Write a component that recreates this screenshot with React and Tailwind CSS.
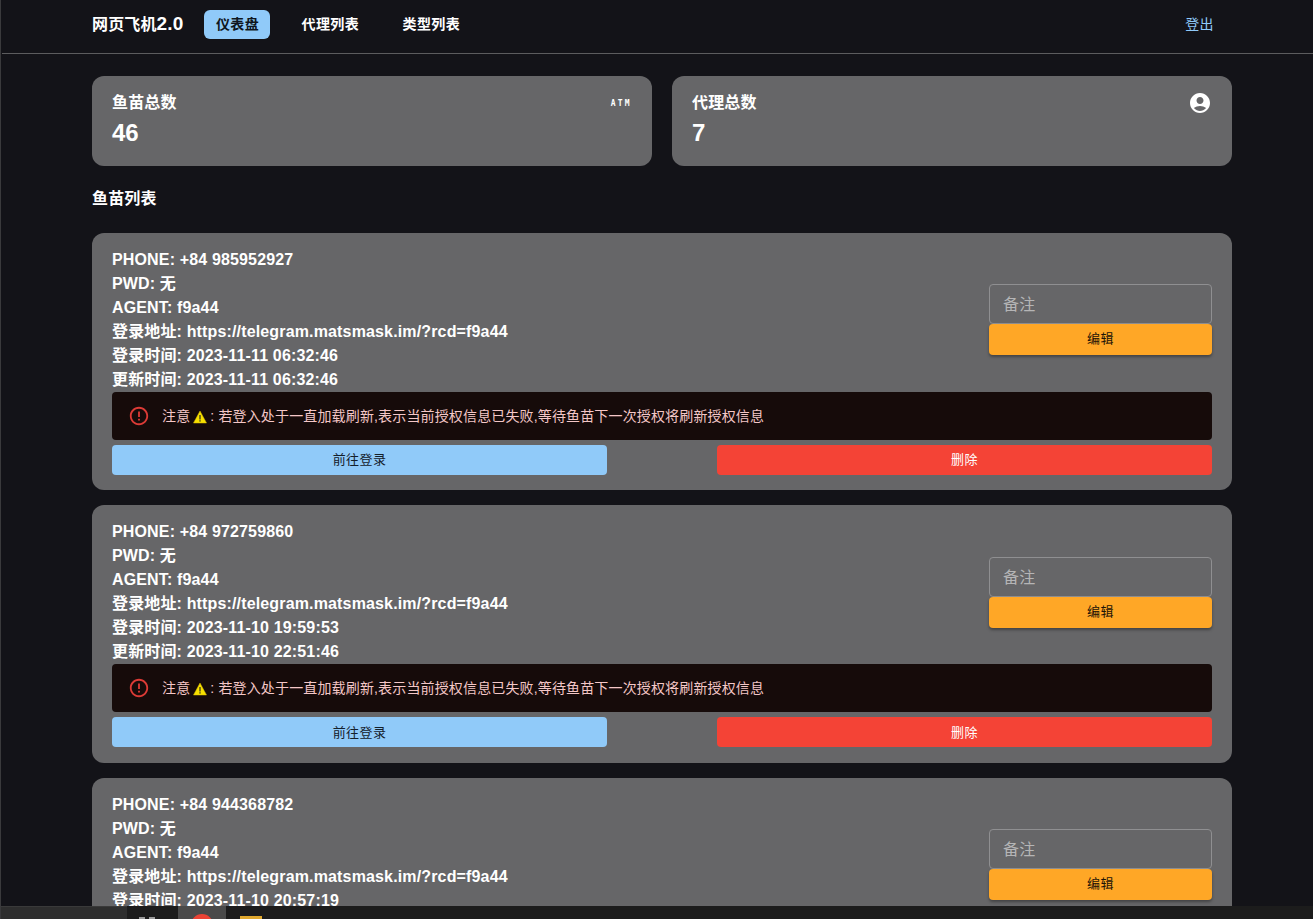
const font = { fontFamily: '"Liberation Sans", "Noto Sans CJK SC", sans-serif' };

function Account() {
  return (
    <svg viewBox="0 0 24 24" className="w-6 h-6" fill="#fff">
      <path d="M12 2C6.48 2 2 6.48 2 12s4.48 10 10 10 10-4.48 10-10S17.52 2 12 2zm0 4c1.93 0 3.5 1.57 3.5 3.5S13.93 13 12 13s-3.5-1.57-3.5-3.5S10.07 6 12 6zm0 14c-2.03 0-4.43-.82-6.14-2.88C7.55 15.8 9.68 15 12 15s4.45.8 6.14 2.12C16.43 19.18 14.03 20 12 20z" />
    </svg>
  );
}

function Alert() {
  return (
    <svg viewBox="0 0 24 24" className="w-[22px] h-[22px] shrink-0" fill="#dc3b36">
      <path d="M11 15h2v2h-2zm0-8h2v6h-2zm.99-5C6.47 2 2 6.48 2 12s4.47 10 9.99 10C17.52 22 22 17.52 22 12S17.52 2 11.99 2zM12 20c-4.42 0-8-3.58-8-8s3.58-8 8-8 8 3.58 8 8-3.58 8-8 8z" />
    </svg>
  );
}

function Warn() {
  return (
    <svg viewBox="0 0 14 14" className="w-[14px] h-[14px] inline-block align-[-3px] mx-[3px]">
      <path d="M7 1 L13.5 13 H0.5 Z" fill="#f7e000" stroke="#d8b800" strokeWidth="0.5" />
      <rect x="6.4" y="5" width="1.2" height="4.5" fill="#222" />
      <rect x="6.4" y="10.2" width="1.2" height="1.4" fill="#222" />
    </svg>
  );
}

function Stat({ title, value, icon }) {
  return (
    <div className="flex-1 h-[90px] bg-[#666668] rounded-xl px-5 pt-[14px] text-white flex justify-between">
      <div>
        <div className="text-base font-bold leading-6 tracking-[0.15px] mt-px">{title}</div>
        <div className="text-2xl font-bold leading-8 mt-[2px]">{value}</div>
      </div>
      {icon}
    </div>
  );
}

function Fish({ phone, login, update }) {
  const lines = [
    `PHONE: ${phone}`,
    'PWD: 无',
    'AGENT: f9a44',
    '登录地址: https://telegram.matsmask.im/?rcd=f9a44',
    `登录时间: ${login}`,
    `更新时间: ${update}`,
  ];
  return (
    <div className="bg-[#666668] rounded-xl px-5 pt-[14px] pb-[15.5px] mb-[15px] text-white">
      <div className="flex items-center justify-between">
        <div className="text-base font-bold leading-6 tracking-[0.15px] pt-px -mb-px">
          {lines.map((l) => (
            <div key={l}>{l}</div>
          ))}
        </div>
        <div className="w-[223px] pt-[2px]">
          <div className="h-10 border border-[#8f8f91] rounded px-[13px] pt-[2px] flex items-center text-base text-[#b5b5b6] tracking-[0.15px]">
            备注
          </div>
          <button className="w-full h-[31px] pb-[2px] rounded bg-[#ffa726] text-[#1c1408] text-[13px] tracking-[0.4px] flex items-center justify-center shadow-[0_2px_3px_rgba(0,0,0,0.35)]">
            编辑
          </button>
        </div>
      </div>
      <div className="h-12 mt-px rounded bg-[#160b0a] text-[#f4c7c7] text-sm tracking-[0.15px] flex items-center px-4">
        <Alert />
        <span className="ml-[12px]">
          注意
          <Warn />: 若登入处于一直加载刷新,表示当前授权信息已失败,等待鱼苗下一次授权将刷新授权信息
        </span>
      </div>
      <div className="flex justify-between mt-[5px]">
        <button className="w-[495px] h-[30px] rounded bg-[#90caf9] text-[#14202b] text-[13px] tracking-[0.4px] flex items-center justify-center">
          前往登录
        </button>
        <button className="w-[495px] h-[30px] rounded bg-[#f44336] text-white text-[13px] tracking-[0.4px] flex items-center justify-center">
          删除
        </button>
      </div>
    </div>
  );
}

export default function App() {
  return (
    <div className="h-[919px] overflow-hidden bg-[#131318] border-l border-l-[#3a3a3c] flex flex-col" style={font}>
      <nav className="h-[54px] shrink-0 border-b border-[#5c5c5e] ml-px pl-[90px] pr-[99px] pb-[5px] flex items-center text-white">
        <div className="text-base font-bold mr-[21px] tracking-[0.15px]">
          网页飞机<span className="text-[19px]">2.0</span>
        </div>
        <div className="h-[29px] w-[66px] rounded-md bg-[#90caf9] text-[#0f1620] text-sm font-bold tracking-[0.4px] flex items-center justify-center mr-[31px]">
          仪表盘
        </div>
        <div className="text-sm font-bold tracking-[0.4px] w-[57px] mr-[44px] whitespace-nowrap">代理列表</div>
        <div className="text-sm font-bold tracking-[0.4px]">类型列表</div>
        <div className="ml-auto text-sm tracking-[0.4px] text-[#90caf9]">登出</div>
      </nav>
      <main className="flex-1 min-h-0 overflow-hidden w-[1140px] ml-[91px] pt-[22px]">
        <div className="flex gap-5">
          <Stat
            title="鱼苗总数"
            value="46"
            icon={
              <span className="text-[8px] leading-3 font-bold tracking-[2.3px] mt-[8px]" style={{ fontFamily: '"DejaVu Sans Mono", monospace' }}>
                ATM
              </span>
            }
          />
          <Stat title="代理总数" value="7" icon={<div className="mt-px"><Account /></div>} />
        </div>
        <h2 className="text-base font-bold tracking-[0.15px] text-white leading-6 mt-[21px] mb-[21.75px]">鱼苗列表</h2>
        <Fish phone="+84 985952927" login="2023-11-11 06:32:46" update="2023-11-11 06:32:46" />
        <Fish phone="+84 972759860" login="2023-11-10 19:59:53" update="2023-11-10 22:51:46" />
        <Fish phone="+84 944368782" login="2023-11-10 20:57:19" update="2023-11-10 20:57:19" />
      </main>
      <div className="h-[13px] shrink-0 -ml-px bg-[#1c1c1c] flex items-stretch overflow-hidden">
        <div className="w-[127px] bg-[#2e2e2e] border-t border-[#3a3a3a]" />
        <div className="w-[51px] flex gap-[4px] pl-[12px] pt-[11px]">
          <div className="w-[6px] h-[2px] bg-[#9a9a9a]" />
          <div className="w-[6px] h-[2px] bg-[#9a9a9a]" />
        </div>
        <div className="w-[48px] bg-[#4a4a4a] flex justify-center">
          <div className="w-[22px] h-[22px] rounded-full bg-[#ea4335] mt-[8px] shrink-0" />
        </div>
        <div className="ml-[14px] mt-[10px] w-[22px] h-[3px] bg-[#e0a82e]" />
      </div>
    </div>
  );
}
